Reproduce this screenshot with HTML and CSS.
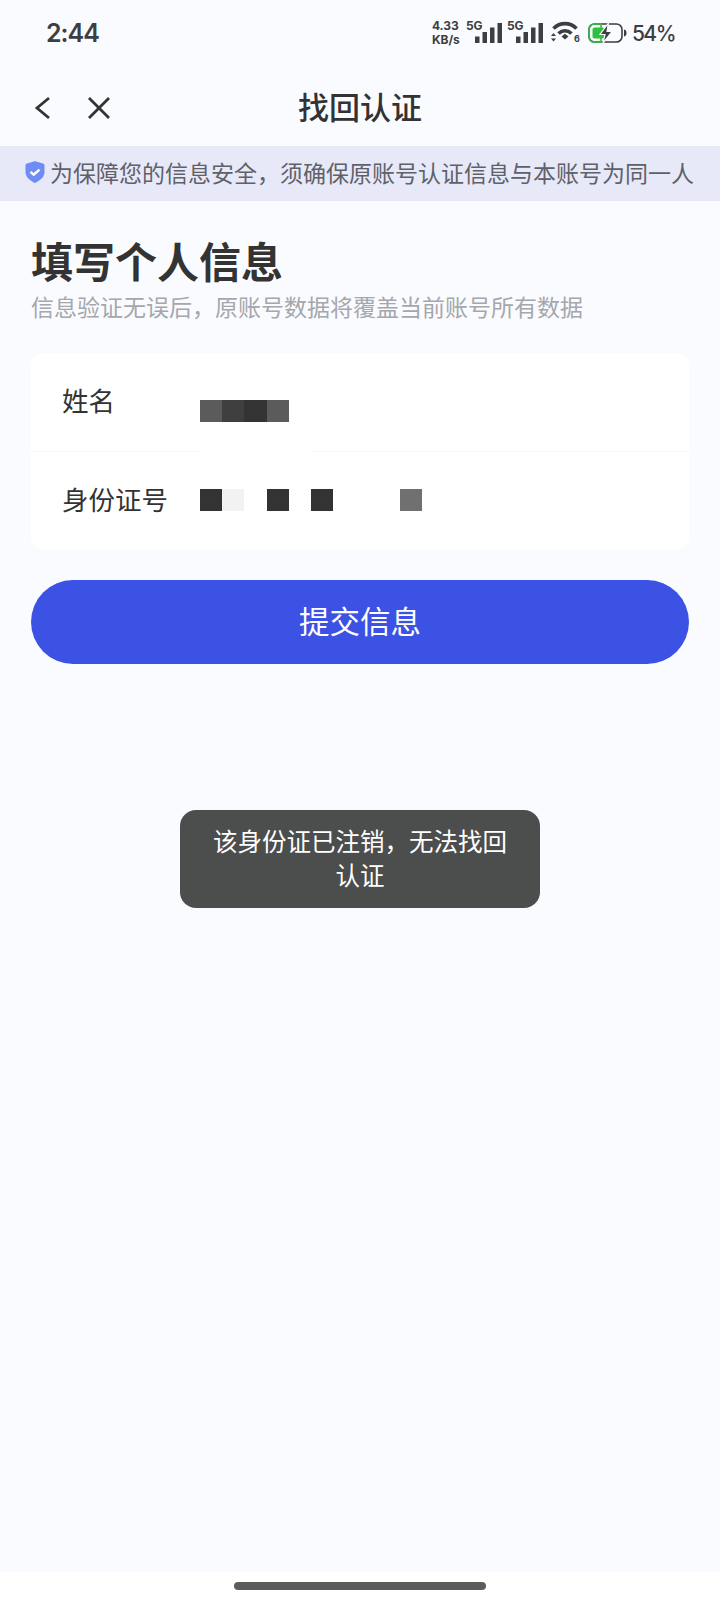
FILE: index.html
```html
<!DOCTYPE html>
<html lang="zh-CN">
<head>
    <meta charset="UTF-8">
    <meta name="viewport" content="width=device-width, initial-scale=1.0">
    <title>找回认证</title>
    <link rel="stylesheet" href="styles.css">
</head>
<body>
    <div class="screen">
        <!-- Status bar -->
        <div class="status-bar">
            <span class="time">2:44</span>
            <div class="status-icons">
                <span class="speed">4.33<br>KB/s</span>
                <div class="signal">
                    <span class="signal-label">5G</span>
                    <svg width="27" height="20" viewBox="0 0 27 20"><path d="M0 13.500h4.500V20H0zM7.500 9H12v11H7.500zM15 4.500h4.500V20H15zM22.500 0H27v20h-4.500z" fill="#3c3e42"/></svg>
                </div>
                <div class="signal">
                    <span class="signal-label">5G</span>
                    <svg width="27" height="20" viewBox="0 0 27 20"><path d="M0 13.500h4.500V20H0zM7.500 9H12v11H7.500zM15 4.500h4.500V20H15zM22.500 0H27v20h-4.500z" fill="#3c3e42"/></svg>
                </div>
                <svg class="wifi" width="30" height="24" viewBox="0 0 30 24">
                    <path d="M2.500 7.500C9 1 19 1 25.500 7.500" fill="none" stroke="#3c3e42" stroke-width="3.600"/>
                    <path d="M7.500 12.500C11.500 8.800 16.500 8.800 20.500 12.500" fill="none" stroke="#3c3e42" stroke-width="3.600"/>
                    <path d="M10.500 15.500L14 12.800l3.500 2.700L14 18.500z" fill="#3c3e42"/>
                    <path d="M0 15l2.500-3 2.500 3zM0 17.500l2.500 3 2.500-3z" fill="#3c3e42"/>
                    <text x="23" y="21" class="wifi-six">6</text>
                </svg>
                <svg class="battery" width="39" height="20" viewBox="0 0 39 20">
                    <rect x="1" y="1" width="33" height="18" rx="5.500" fill="none" stroke="#3c3e42" stroke-width="1.600"/>
                    <path d="M1 6.500C1 3 3 1 6.500 1H13v18H6.500C3 19 1 17 1 13.500z" fill="none" stroke="#2ec13f" stroke-width="1.600"/>
                    <path d="M36 6.500c2 .5 2.500 1.500 2.500 3.500s-.5 3-2.500 3.500z" fill="#3c3e42"/>
                    <rect x="4.500" y="4.500" width="12" height="11" rx="2" fill="#2ec13f"/>
                    <path d="M20.500 0L12 11.500h5L15 20l9-11.500h-5z" fill="#3c3e42" stroke="#fafbff" stroke-width="1.200"/>
                </svg>
                <span class="percent">54%</span>
            </div>
        </div>

        <!-- Nav bar -->
        <div class="nav-bar">
            <div class="nav-icons">
                <svg width="18" height="24" viewBox="0 0 18 24"><path d="M15 2L3 12l12 10" fill="none" stroke="#333" stroke-width="2.800"/></svg>
                <svg width="24" height="24" viewBox="0 0 24 24"><path d="M2 2l20 20M22 2L2 22" fill="none" stroke="#333" stroke-width="2.800"/></svg>
            </div>
            <h1 class="nav-title">找回认证</h1>
        </div>

        <!-- Notice -->
        <div class="notice">
            <svg width="20" height="22" viewBox="0 0 20 22">
                <path d="M8.800.5c.8-.3 1.600-.3 2.400 0l6.800 2c1 .3 1.500 1 1.500 2v6.500c0 4.800-3.800 8.300-9.500 11C4.300 19.300.5 15.800.5 11V4.500c0-1 .5-1.700 1.500-2z" fill="#6f8cf3"/>
                <path d="M5.500 10.800l3.200 2.800 5.800-5" fill="none" stroke="#fff" stroke-width="2.400"/>
            </svg>
            <span>为保障您的信息安全，须确保原账号认证信息与本账号为同一人</span>
        </div>

        <div class="content">
            <h2 class="heading">填写个人信息</h2>
            <p class="subheading">信息验证无误后，原账号数据将覆盖当前账号所有数据</p>

            <div class="card">
                <div class="row row-name">
                    <span class="label">姓名</span>
                    <div class="mosaic">
                        <i class="px px-mid"></i><i class="px px-dark"></i><i class="px px-darker"></i><i class="px px-mid"></i>
                    </div>
                </div>
                <div class="divider"></div>
                <div class="row row-id">
                    <span class="label">身份证号</span>
                    <div class="mosaic">
                        <i class="px px-darker"></i><i class="px px-faint"></i><i class="px"></i><i class="px px-darker"></i><i class="px"></i><i class="px px-darker"></i><i class="px"></i><i class="px"></i><i class="px"></i><i class="px px-grey"></i>
                    </div>
                </div>
            </div>

            <button class="submit" type="button">提交信息</button>
        </div>

        <div class="toast">该身份证已注销，无法找回认证</div>

        <div class="home-area"><div class="home-bar"></div></div>
    </div>
</body>
</html>
```

FILE: styles.css
```css
* {
    box-sizing: border-box;
}
body {
    margin: 0;
    background-color: #fafbff;
    font-family: "Noto Sans CJK SC", "Noto Sans", sans-serif;
    color: #333333;
}
.screen {
    position: relative;
    width: 720px;
    height: 1600px;
    display: flex;
    flex-direction: column;
    background-color: #fafbff;
}
.status-bar {
    height: 66px;
    padding: 0 45px 0 46px;
    display: flex;
    align-items: center;
    justify-content: space-between;
}
.time {
    font-family: Inter, sans-serif;
    font-size: 25px;
    font-weight: 600;
    letter-spacing: -1px;
    color: #3c3e42;
}
.status-icons {
    display: flex;
    align-items: center;
    gap: 5px;
    color: #3c3e42;
    font-family: Inter, sans-serif;
}
.speed {
    width: 29px;
    font-size: 12px;
    font-weight: 700;
    line-height: 14px;
    white-space: nowrap;
}
.signal {
    position: relative;
    width: 36px;
    height: 20px;
    display: flex;
    justify-content: flex-end;
}
.signal-label {
    position: absolute;
    left: 0;
    top: -3px;
    font-size: 12px;
    font-weight: 700;
    line-height: 12px;
}
.wifi {
    margin-left: 3px;
}
.battery {
    margin-left: 2px;
}
.wifi-six {
    font-size: 9px;
    font-weight: 700;
    fill: #3c3e42;
}
.percent {
    font-size: 21px;
    font-weight: 500;
    letter-spacing: -1.500px;
}
.nav-bar {
    position: relative;
    height: 80px;
    display: flex;
    align-items: center;
    justify-content: center;
}
.nav-icons {
    position: absolute;
    left: 34px;
    top: 30px;
    display: flex;
    gap: 35px;
}
.nav-title {
    margin: 0;
    font-size: 31px;
    font-weight: 500;
    line-height: 40px;
}
.notice {
    height: 55px;
    padding: 0 0 3px 25px;
    display: flex;
    align-items: center;
    gap: 5px;
    background-color: #e7e9f8;
    color: #5f6169;
    font-size: 23px;
    white-space: nowrap;
}
.content {
    padding: 31px 31px 0;
}
.heading {
    margin: 0;
    font-size: 42px;
    font-weight: 700;
    line-height: 56px;
}
.subheading {
    margin: 2px 0 31px;
    font-size: 23px;
    line-height: 32px;
    color: #a5a7ad;
}
.card {
    background-color: #ffffff;
    border-radius: 12px;
}
.row {
    padding-left: 31px;
    display: flex;
    align-items: center;
}
.row-name {
    height: 98px;
}
.row-id {
    height: 97px;
}
.divider {
    height: 1px;
    background: linear-gradient(to right, #f7f7f9 170px, #ffffff 170px, #ffffff 280px, #f7f7f9 280px);
}
.label {
    width: 138px;
    font-size: 26.500px;
    line-height: 40px;
}
.row-name .label {
    margin-top: -4px;
}
.row-id .label {
    margin-top: -3px;
}
.mosaic {
    display: flex;
}
.row-name .mosaic {
    margin-top: 18px;
}
.row-id .mosaic {
    margin-top: -1px;
}
.px {
    display: block;
    width: 22.200px;
    height: 22px;
}
.px-mid {
    background-color: #5b5b5b;
}
.px-dark {
    background-color: #3f3f3f;
}
.px-darker {
    background-color: #333333;
}
.px-grey {
    background-color: #707070;
}
.px-faint {
    background-color: #f2f2f2;
}
.submit {
    display: block;
    width: 100%;
    height: 84px;
    margin-top: 31px;
    padding: 0 0 5px;
    border: none;
    border-radius: 42px;
    background-color: #3b52e4;
    color: #ffffff;
    font-family: inherit;
    font-size: 30.500px;
}
.toast {
    position: absolute;
    left: 180px;
    top: 810px;
    width: 360px;
    height: 98px;
    padding: 14px 30px;
    border-radius: 16px;
    background-color: #4c4d4d;
    color: #ffffff;
    font-size: 24.500px;
    line-height: 34px;
    text-align: center;
}
.home-area {
    position: absolute;
    left: 0;
    right: 0;
    bottom: 0;
    height: 28px;
    background-color: #ffffff;
    display: flex;
    justify-content: center;
    padding-top: 10px;
}
.home-bar {
    width: 252px;
    height: 8px;
    border-radius: 4px;
    background-color: #5c5c5c;
}
```
